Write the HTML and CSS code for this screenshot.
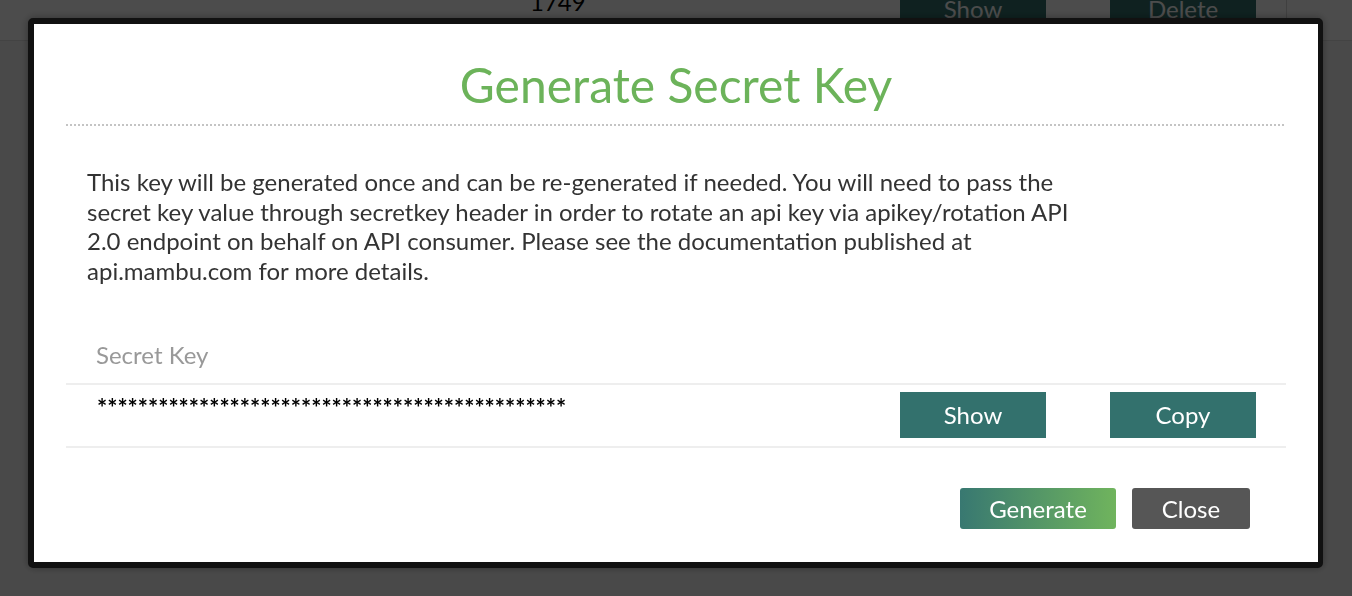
FILE: index.html
```html
<!DOCTYPE html>
<html lang="en">
<head>
<meta charset="utf-8">
<title>Generate Secret Key</title>
<link rel="stylesheet" href="styles.css">
</head>
<body>
  <div class="page">
    <div class="page-row">
      <div class="cell cell-num">1749</div>
      <div class="cell cell-actions">
        <span class="page-btn">Show</span>
        <span class="page-btn">Delete</span>
      </div>
      <div class="cell cell-end"></div>
    </div>
  </div>
  <div class="overlay"></div>
  <div class="modal">
    <h1 class="modal-title">Generate Secret Key</h1>
    <div class="title-rule"></div>
    <p class="modal-text">This key will be generated once and can be re-generated if needed. You will need to pass the<br>secret key value through secretkey header in order to rotate an api key via apikey/rotation API<br>2.0 endpoint on behalf on API consumer. Please see the documentation published at<br>api.mambu.com for more details.</p>
    <div class="key-table">
      <div class="key-head">Secret Key</div>
      <div class="key-row">
        <div class="key-value">**********************************************</div>
        <div class="key-actions">
          <button class="btn btn-teal">Show</button>
          <button class="btn btn-teal">Copy</button>
        </div>
      </div>
    </div>
    <div class="modal-footer">
      <button class="btn btn-generate">Generate</button>
      <button class="btn btn-close">Close</button>
    </div>
  </div>
</body>
</html>
```
FILE: styles.css
```css
html, body {
  margin: 0;
  padding: 0;
}
body {
  width: 1352px;
  height: 596px;
  overflow: hidden;
  background: #f6f6f6;
  font-family: Lato, "Open Sans", sans-serif;
}
.page {
  height: 596px;
}
.page-row {
  display: flex;
  height: 64px;
  margin-top: -24px;
  background: #ffffff;
  border-bottom: 1px solid #e2e2e2;
}
.cell-num {
  padding-left: 530px;
  padding-top: 11px;
  font-size: 24px;
  color: #000;
  box-sizing: border-box;
  width: 900px;
}
.cell-actions {
  display: flex;
  gap: 64px;
  padding-top: 9px;
  width: 386px;
  box-sizing: border-box;
}
.cell-end {
  flex: 1;
  border-left: 1px solid #d8d8d8;
}
.page-btn {
  display: flex;
  align-items: center;
  justify-content: center;
  width: 146px;
  height: 46px;
  background: #33716d;
  color: #fff;
  font-size: 24px;
}
.overlay {
  position: fixed;
  inset: 0;
  background: rgba(0, 0, 0, 0.7);
}
.modal {
  position: fixed;
  left: 28px;
  top: 18px;
  width: 1295px;
  height: 550px;
  box-sizing: border-box;
  border-style: solid;
  border-color: #111111;
  border-width: 6px 5px 6px 6px;
  border-radius: 5px;
  background: #ffffff;
  padding: 33px 32px 0 32px;
  box-shadow: 0 0 8px rgba(0, 0, 0, 0.35);
}
.modal-title {
  margin: 0;
  text-align: center;
  font-size: 48px;
  font-weight: 400;
  line-height: 56px;
  color: #6cb35a;
}
.title-rule {
  margin-top: 11px;
  height: 2px;
  background-image: linear-gradient(to right, #c4c4c4 2px, transparent 2px);
  background-size: 4px 2px;
  background-repeat: repeat-x;
}
.modal-text {
  margin: 41px 0 0 21px;
  font-size: 24px;
  line-height: 29.5px;
  color: #333333;
}
.key-table {
  margin-top: 55px;
}
.key-head {
  padding: 0 0 13px 30px;
  font-size: 24px;
  line-height: 29.5px;
  color: #999999;
  border-bottom: 2px solid #eeeeee;
}
.key-row {
  display: flex;
  align-items: flex-start;
  padding: 7px 30px 8px 31px;
  border-bottom: 2px solid #eeeeee;
}
.key-value {
  flex: 1;
  margin-top: 4px;
  font-weight: 700;
  font-size: 24px;
  line-height: 24px;
  color: #000;
}
.key-actions {
  display: flex;
  gap: 64px;
}
.btn {
  border: 0;
  margin: 0;
  padding: 0;
  font-family: Lato, "Open Sans", sans-serif;
  font-size: 24px;
  color: #ffffff;
  cursor: pointer;
}
.btn-teal {
  width: 146px;
  height: 46px;
  background: #33716d;
}
.modal-footer {
  display: flex;
  justify-content: flex-end;
  gap: 16px;
  margin-top: 40px;
  padding-right: 36px;
}
.btn-generate {
  width: 156px;
  height: 41px;
  border-radius: 3px;
  background: linear-gradient(to right, #387871, #70b45d);
}
.btn-close {
  width: 118px;
  height: 41px;
  border-radius: 3px;
  background: #565656;
}
```
